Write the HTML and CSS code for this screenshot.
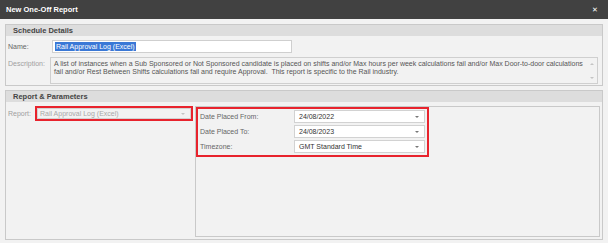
FILE: index.html
```html
<!DOCTYPE html>
<html lang="en">
<head>
  <meta charset="UTF-8" />
  <title>New One-Off Report</title>
  <link rel="stylesheet" href="styles.css">
</head>
<body>
  <div class="window">
    <div class="titlebar">
      <span class="title">New One-Off Report</span>
      <span class="close">&#x2715;</span>
    </div>

    <div class="content">
      <section class="panel schedule">
        <div class="panel-head">Schedule Details</div>
        <div class="panel-body">
          <div class="row name-row">
            <label>Name:</label>
            <div class="textbox"><span class="selected">Rail Approval Log (Excel)</span></div>
          </div>
          <div class="row desc-row">
            <label class="disabled">Description:</label>
            <div class="memo">
              <p>A list of instances when a Sub Sponsored or Not Sponsored candidate is placed on shifts and/or Max hours per week calculations fail and/or Max Door-to-door calculations fail and/or Rest Between Shifts calculations fail and require Approval.&nbsp; This report is specific to the Rail industry.</p>
              <div class="scroll"><span class="up"></span><span class="down"></span></div>
            </div>
          </div>
        </div>
      </section>

      <section class="panel params">
        <div class="panel-head">Report &amp; Parameters</div>
        <div class="panel-body split">
          <div class="report-col">
            <label class="disabled">Report:</label>
            <div class="mark">
              <div class="combo off"><span>Rail Approval Log (Excel)</span><i class="arrow"></i></div>
            </div>
          </div>
          <div class="group">
            <div class="mark params-box">
              <div class="param">
                <label>Date Placed From:</label>
                <div class="combo"><span>24/08/2022</span><i class="arrow"></i></div>
              </div>
              <div class="param">
                <label>Date Placed To:</label>
                <div class="combo"><span>24/08/2023</span><i class="arrow"></i></div>
              </div>
              <div class="param">
                <label>Timezone:</label>
                <div class="combo"><span>GMT Standard Time</span><i class="arrow"></i></div>
              </div>
            </div>
          </div>
        </div>
      </section>
    </div>
  </div>
</body>
</html>
```

FILE: styles.css
```css
* {
  box-sizing: border-box;
}

body {
  margin: 0;
  background: #f2f2f2;
  font-family: 'Liberation Sans', Arial, sans-serif;
  font-size: 7px;
  color: #444;
}

.window {
  width: 608px;
  height: 243px;
  overflow: hidden;
}

.titlebar {
  height: 19px;
  background: #414141;
  color: #fff;
  display: flex;
  align-items: center;
  justify-content: space-between;
  padding: 0 10px 0 6px;
}

.title {
  font-weight: bold;
  font-size: 7.5px;
}

.close {
  font-size: 7px;
}

.content {
  padding: 5px 5px 3px 5px;
}

.panel {
  border: 1px solid #c9c9c9;
}

.params {
  margin-top: 4px;
}

.panel-head {
  height: 11px;
  line-height: 11px;
  background: #dddddd;
  font-weight: bold;
  font-size: 7.5px;
  color: #444;
  padding-left: 7px;
}

.panel-body {
  padding: 4px 4px 1px 2px;
}

.row {
  display: flex;
  align-items: flex-start;
}

label {
  color: #666;
}

label.disabled {
  color: #a0a0a0;
}

.name-row {
  align-items: center;
  margin-bottom: 4px;
}

.name-row label,
.desc-row label {
  width: 44px;
  flex-shrink: 0;
}

.desc-row label {
  width: 42px;
  padding-top: 3px;
}

.textbox {
  width: 240px;
  height: 13px;
  background: #fff;
  border: 1px solid #cfcfcf;
  display: flex;
  align-items: center;
  padding-left: 2px;
}

.selected {
  background: #3a78d6;
  color: #fff;
  line-height: 9px;
  padding: 0 1px;
}

.memo {
  flex: 1;
  height: 27px;
  border: 1px solid #cfcfcf;
  display: flex;
  color: #555;
}

.memo p {
  flex: 1;
  margin: 0;
  padding: 2px 3px;
  line-height: 8px;
}

.scroll {
  width: 10px;
  display: flex;
  flex-direction: column;
  justify-content: space-between;
  align-items: center;
  padding: 5px 0 4px;
}

.up,
.down {
  width: 0;
  height: 0;
  border-left: 2px solid transparent;
  border-right: 2px solid transparent;
}

.up {
  border-bottom: 2px solid #c4c4c4;
}

.down {
  border-top: 2px solid #c4c4c4;
}

.split {
  display: flex;
  height: 137px;
  padding: 0 2px 2px 2px;
}

.report-col {
  width: 186px;
  flex-shrink: 0;
  display: flex;
  align-items: flex-start;
  padding-top: 4px;
}

.report-col label {
  width: 27px;
  padding-top: 4px;
}

.mark {
  border: 2px solid #e8232d;
}

.report-col .mark {
  width: 158px;
}

.combo {
  height: 13px;
  background: #fff;
  border: 1px solid #d2d2d2;
  display: flex;
  align-items: center;
  justify-content: space-between;
  padding: 0 5px 0 4px;
  color: #333;
}

.combo.off {
  height: 11px;
  background: #f2f2f2;
  color: #a8a8a8;
  padding-left: 2px;
}

.arrow {
  width: 0;
  height: 0;
  border-left: 2px solid transparent;
  border-right: 2px solid transparent;
  border-top: 2px solid #777;
}

.combo.off .arrow {
  border-top-color: #c4c4c4;
}

.group {
  flex: 1;
  margin-top: 4px;
  margin-left: 1px;
  border: 1px solid #c9c9c9;
}

.params-box {
  width: 233px;
  display: flex;
  flex-direction: column;
  gap: 2px;
  padding: 1px 2px 2px 2px;
}

.param {
  display: flex;
  align-items: center;
}

.param label {
  width: 94px;
  flex-shrink: 0;
}

.param .combo {
  flex: 1;
}
```
